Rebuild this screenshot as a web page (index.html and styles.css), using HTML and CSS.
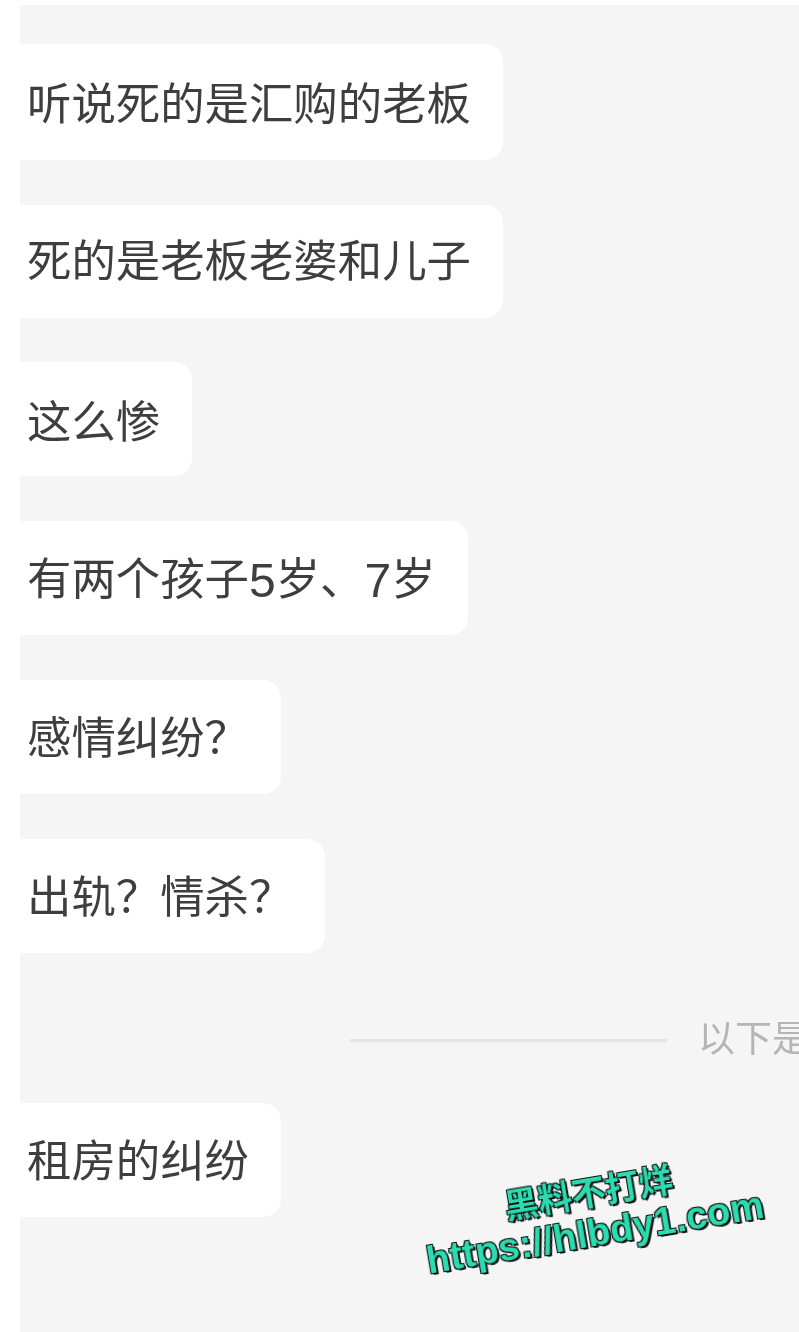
FILE: index.html
```html
<!DOCTYPE html>
<html lang="zh-CN">
<head>
<meta charset="utf-8">
<title>聊天记录</title>
<link rel="stylesheet" href="styles.css">
</head>
<body>
<main class="chat">
  <div class="stream">
    <div class="bubble bubble-first">听说死的是汇购的老板</div>
    <div class="bubble bubble-second">死的是老板老婆和儿子</div>
    <div class="bubble bubble-low">这么惨</div>
    <div class="bubble">有两个孩子<span class="num">5</span>岁、<span class="num">7</span>岁</div>
    <div class="bubble">感情纠纷&#xFF1F;</div>
    <div class="bubble">出轨&#xFF1F;情杀&#xFF1F;</div>
    <div class="divider"><span class="line"></span><span class="divider-text">以下是新消息</span></div>
    <div class="bubble">租房的纠纷</div>
  </div>
</main>
<div class="watermark">
  <div class="wm-cn">黑料不打烊</div>
  <div class="wm-url">https://hlbdy1.com</div>
</div>
</body>
</html>
```
FILE: styles.css
```css
* { box-sizing: border-box; }
html, body { margin: 0; height: 100%; }
body {
  background: #fff;
  overflow: hidden;
  font-family: "Liberation Sans", "Noto Sans CJK SC", sans-serif;
}
.chat {
  height: 1332px;
  margin: 5px 0 0 20px;
  background: #f5f5f5;
  overflow: hidden;
}
.stream {
  display: flex;
  flex-direction: column;
  align-items: flex-start;
  padding-top: 39px;
  gap: 45px;
  filter: blur(0.6px);
}
.bubble {
  height: 114px;
  padding: 5px 32px 0 7px;
  display: flex;
  align-items: center;
  background: #fff;
  border-radius: 0 18px 18px 0;
  font-size: 44.4px;
  line-height: 1;
  color: #3e3e3e;
  white-space: nowrap;
}
.bubble-first { height: 116px; padding-top: 6px; }
.bubble-second { height: 113px; margin-bottom: -1px; padding-top: 2px; }
.bubble-low { padding-top: 9px; }
.num { font-size: 48px; }
.divider {
  display: flex;
  align-items: center;
  gap: 31px;
  height: 44px;
  margin: 20px 0 -4px 330px;
  white-space: nowrap;
}
.line {
  width: 317px;
  height: 3px;
  background: #e4e4e4;
}
.divider-text {
  font-size: 37px;
  color: #b5b5b5;
  margin-bottom: 8px;
}
.watermark {
  position: absolute;
  left: 417px;
  top: 1176px;
  width: 350px;
  text-align: center;
  transform: rotate(-9.5deg);
  font-weight: 700;
  color: #2bdcb0;
  line-height: 1;
  white-space: nowrap;
  text-shadow: -1px -1px 0 #111, 1px -1px 0 #111, -1px 1px 0 #111, 2px 2px 0 #111;
  filter: blur(0.4px);
}
.wm-cn { font-size: 34px; -webkit-text-stroke: 1px #2bdcb0; paint-order: stroke fill; }
.wm-url { font-size: 38px; margin-top: 4px; letter-spacing: 0.2px; -webkit-text-stroke: 1.4px #2bdcb0; paint-order: stroke fill; }
```
